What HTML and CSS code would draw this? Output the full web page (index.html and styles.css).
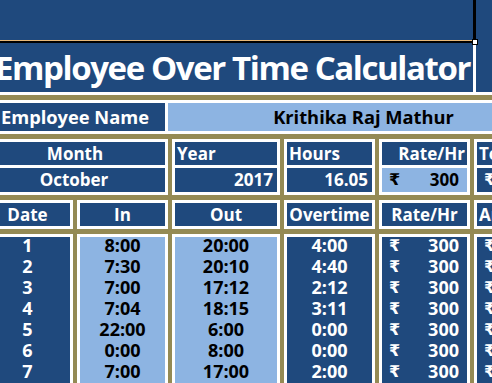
FILE: index.html
```html
<!DOCTYPE html>
<html lang="en">
<head>
<meta charset="utf-8">
<title>Employee Over Time Calculator</title>
<link rel="stylesheet" href="styles.css">
</head>
<body>
<div class="top">
  <div class="top-main"></div>
  <div class="top-edge"></div>
  <div class="top-side"></div>
  <span class="handle"></span>
</div>
<div class="title-row">
  <div class="title-cell"><h1 class="title">Employee Over Time Calculator</h1></div>
  <div class="title-side"></div>
</div>
<div class="sheet">
  <div class="name-row">
    <div class="name-label">Employee Name</div>
    <div class="name-value">Krithika Raj Mathur</div>
  </div>

  <div class="stack span2">
    <div class="hd center">Month</div>
    <div class="val center">October</div>
  </div>
  <div class="stack">
    <div class="hd left">Year</div>
    <div class="val right">2017</div>
  </div>
  <div class="stack">
    <div class="hd left">Hours</div>
    <div class="val right">16.05</div>
  </div>
  <div class="stack">
    <div class="hd right">Rate/Hr</div>
    <div class="val light money"><span class="cur">₹</span><span>300</span></div>
  </div>
  <div class="stack">
    <div class="hd left">Total</div>
    <div class="val money"><span class="cur">₹</span><span>4,815</span></div>
  </div>

  <div class="head">Date</div>
  <div class="head">In</div>
  <div class="head">Out</div>
  <div class="head">Overtime</div>
  <div class="head">Rate/Hr</div>
  <div class="head left">Amount</div>

  <div class="col">
    <div class="rows">
      <div class="r">1</div><div class="r">2</div><div class="r">3</div><div class="r">4</div><div class="r">5</div><div class="r">6</div><div class="r">7</div>
    </div>
  </div>
  <div class="col light">
    <div class="rows">
      <div class="r">8:00</div><div class="r">7:30</div><div class="r">7:00</div><div class="r">7:04</div><div class="r">22:00</div><div class="r">0:00</div><div class="r">7:00</div>
    </div>
  </div>
  <div class="col light">
    <div class="rows">
      <div class="r">20:00</div><div class="r">20:10</div><div class="r">17:12</div><div class="r">18:15</div><div class="r">6:00</div><div class="r">8:00</div><div class="r">17:00</div>
    </div>
  </div>
  <div class="col">
    <div class="rows">
      <div class="r">4:00</div><div class="r">4:40</div><div class="r">2:12</div><div class="r">3:11</div><div class="r">0:00</div><div class="r">0:00</div><div class="r">2:00</div>
    </div>
  </div>
  <div class="col">
    <div class="rows">
      <div class="r money"><span class="cur">₹</span><span>300</span></div>
      <div class="r money"><span class="cur">₹</span><span>300</span></div>
      <div class="r money"><span class="cur">₹</span><span>300</span></div>
      <div class="r money"><span class="cur">₹</span><span>300</span></div>
      <div class="r money"><span class="cur">₹</span><span>300</span></div>
      <div class="r money"><span class="cur">₹</span><span>300</span></div>
      <div class="r money"><span class="cur">₹</span><span>300</span></div>
    </div>
  </div>
  <div class="col">
    <div class="rows">
      <div class="r money"><span class="cur">₹</span><span>1,200</span></div>
      <div class="r money"><span class="cur">₹</span><span>1,400</span></div>
      <div class="r money"><span class="cur">₹</span><span>660</span></div>
      <div class="r money"><span class="cur">₹</span><span>955</span></div>
      <div class="r money"><span class="cur">₹</span><span>0</span></div>
      <div class="r money"><span class="cur">₹</span><span>0</span></div>
      <div class="r money"><span class="cur">₹</span><span>600</span></div>
    </div>
  </div>
</div>
</body>
</html>
```

FILE: styles.css
```css
* { box-sizing: border-box; }

html, body {
  margin: 0;
  padding: 0;
}

body {
  width: 492px;
  height: 383px;
  overflow: hidden;
  background: #948A54;
  font-family: "Open Sans", "Noto Sans", "DejaVu Sans", sans-serif;
  font-weight: 700;
  font-size: 17px;
  color: #fff;
}

/* top band */
.top {
  position: relative;
  display: flex;
  height: 43px;
}
.top-main {
  width: 473px;
  background: #1F497D;
  border-bottom: 2px solid #000;
  box-shadow: inset 0 -1px 0 #E8B878;
}
.top-edge {
  width: 3px;
  background: #000;
}
.top-side {
  flex: 1;
  background: #1F497D;
}
.handle {
  position: absolute;
  left: 472px;
  top: 39px;
  width: 6px;
  height: 6px;
  border: 1px solid #000;
  background: #fff;
  z-index: 2;
}

/* title */
.title-row {
  display: flex;
  height: 52px;
}
.title-cell {
  width: 476px;
  background: #1F497D;
  border-right: 3px solid #fff;
  border-bottom: 3px solid #fff;
  display: flex;
  justify-content: center;
  align-items: center;
  padding-right: 8px;
}
.title {
  margin: 0;
  font-size: 33px;
  letter-spacing: -1.4px;
  line-height: 49px;
  font-weight: 700;
  white-space: nowrap;
  color: #fff;
}
.title-side {
  flex: 1;
  background: #1F497D;
  border-bottom: 3px solid #fff;
}

/* sheet grid */
.sheet {
  display: grid;
  grid-template-columns: 91px 91px 108px 91px 91px 91px;
  grid-template-rows: 34px 56px 29px auto;
  column-gap: 4px;
  row-gap: 5px;
  margin-left: -18px;
  padding-top: 5px;
  width: 583px;
}

.name-row {
  grid-column: 1 / -1;
  display: flex;
  font-size: 18.3px;
}
.name-label {
  width: 186px;
  background: #1F497D;
  border: 3px solid #fff;
  text-align: center;
  line-height: 28px;
  white-space: nowrap;
}
.name-value {
  flex: 1;
  background: #8DB4E2;
  color: #000;
  border: 3px solid #fff;
  border-left: 0;
  text-align: center;
  line-height: 28px;
  white-space: nowrap;
  padding-right: 3px;
}

.stack {
  display: grid;
  grid-template-rows: 23px 27px;
  border: 3px solid #fff;
  background: #1F497D;
  overflow: hidden;
}
.span2 { grid-column: span 2; }
.stack .hd {
  line-height: 23px;
  white-space: nowrap;
  padding: 0 2px;
}
.stack .val {
  border-top: 3px solid #fff;
  line-height: 24px;
  white-space: nowrap;
  padding: 0 4px 0 2px;
}

.center { text-align: center; }
.left { text-align: left; }
.right { text-align: right; }

.light {
  background: #8DB4E2;
  color: #000;
}

.money {
  display: flex;
  justify-content: space-between;
  padding: 0 8px 0 7px !important;
  white-space: nowrap;
}
.cur {
  font-family: "DejaVu Sans", "Noto Sans", sans-serif;
  font-weight: 700;
  font-size: 16px;
}

.head {
  background: #1F497D;
  border: 3px solid #fff;
  line-height: 23px;
  text-align: center;
  white-space: nowrap;
  overflow: hidden;
}
.head.left { text-align: left; padding-left: 2px; }

.col {
  background: #1F497D;
  border: 3px solid #fff;
  border-bottom: 0;
  overflow: hidden;
  height: 160px;
}
.col.light {
  background: #8DB4E2;
  color: #000;
}
.rows {
  margin-top: -2px;
  font-size: 18px;
}
.r {
  height: 21px;
  line-height: 21px;
  text-align: center;
  white-space: nowrap;
}
```
